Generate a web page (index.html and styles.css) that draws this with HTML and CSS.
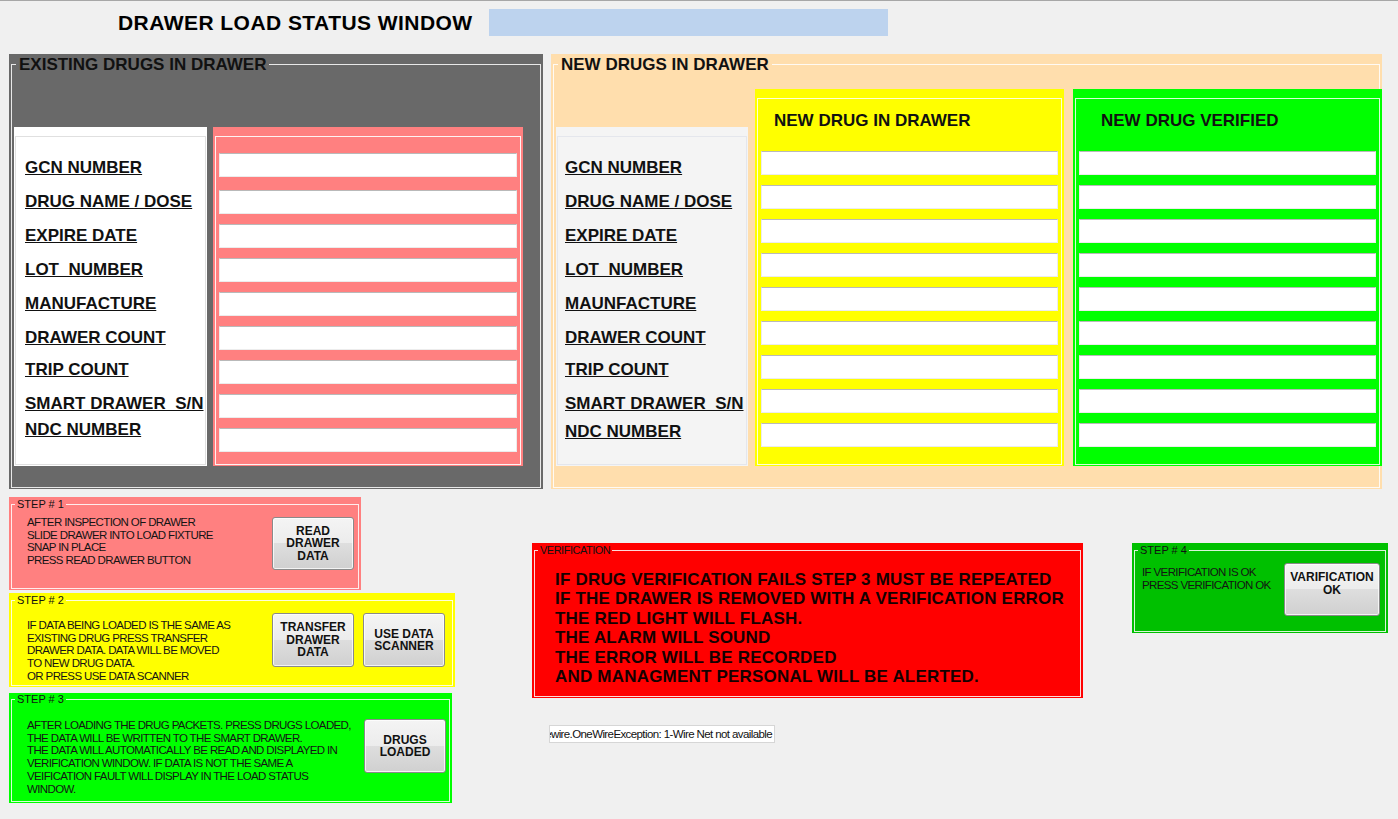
FILE: index.html
```html
<!DOCTYPE html>
<html>
<head>
<meta charset="utf-8">
<title>Drawer Load Status</title>
<link rel="stylesheet" href="styles.css">
</head>
<body>
<div class="app">
  <header class="hdr">
    <h1 class="title">DRAWER LOAD STATUS WINDOW</h1>
    <div class="status-bar"></div>
  </header>

  <section class="top">
    <div class="gb existing">
      <fieldset>
        <legend>EXISTING DRUGS IN DRAWER</legend>
        <div class="cols">
          <div class="lblpanel lp-white">
            <div class="frame">
              <span class="lbl">GCN NUMBER</span>
              <span class="lbl">DRUG NAME / DOSE</span>
              <span class="lbl">EXPIRE DATE</span>
              <span class="lbl">LOT  NUMBER</span>
              <span class="lbl">MANUFACTURE</span>
              <span class="lbl">DRAWER COUNT</span>
              <span class="lbl lbl-trip">TRIP COUNT</span>
              <span class="lbl">SMART DRAWER  S/N</span>
              <span class="lbl lbl-ndc">NDC NUMBER</span>
            </div>
          </div>
          <div class="fpanel fp-pink">
            <div class="frame">
              <div class="fld fld-first"></div>
              <div class="fld"></div>
              <div class="fld"></div>
              <div class="fld"></div>
              <div class="fld"></div>
              <div class="fld"></div>
              <div class="fld"></div>
              <div class="fld"></div>
              <div class="fld"></div>
            </div>
          </div>
        </div>
      </fieldset>
    </div>

    <div class="gb newd">
      <fieldset>
        <legend>NEW DRUGS IN DRAWER</legend>
        <div class="cols">
          <div class="lblpanel lp-gray">
            <div class="frame">
              <span class="lbl">GCN NUMBER</span>
              <span class="lbl">DRUG NAME / DOSE</span>
              <span class="lbl">EXPIRE DATE</span>
              <span class="lbl">LOT  NUMBER</span>
              <span class="lbl">MAUNFACTURE</span>
              <span class="lbl">DRAWER COUNT</span>
              <span class="lbl lbl-trip">TRIP COUNT</span>
              <span class="lbl">SMART DRAWER  S/N</span>
              <span class="lbl lbl-ndc2">NDC NUMBER</span>
            </div>
          </div>
          <div class="dpanel dp-yellow">
            <div class="frame">
              <div class="dtitle">NEW DRUG IN DRAWER</div>
              <div class="fld"></div>
              <div class="fld"></div>
              <div class="fld"></div>
              <div class="fld"></div>
              <div class="fld"></div>
              <div class="fld"></div>
              <div class="fld"></div>
              <div class="fld"></div>
              <div class="fld"></div>
            </div>
          </div>
          <div class="dpanel dp-green">
            <div class="frame">
              <div class="dtitle">NEW DRUG VERIFIED</div>
              <div class="fld"></div>
              <div class="fld"></div>
              <div class="fld"></div>
              <div class="fld"></div>
              <div class="fld"></div>
              <div class="fld"></div>
              <div class="fld"></div>
              <div class="fld"></div>
              <div class="fld"></div>
            </div>
          </div>
        </div>
      </fieldset>
    </div>
  </section>

  <section class="bottom">
    <div class="col-left">
      <div class="gb step step1">
        <fieldset>
          <legend>STEP # 1</legend>
          <div class="sbody">
            <div class="stxt">AFTER INSPECTION OF DRAWER<br>SLIDE DRAWER INTO LOAD FIXTURE<br>SNAP IN PLACE<br>PRESS READ DRAWER BUTTON</div>
            <button class="btn">READ<br>DRAWER<br>DATA</button>
          </div>
        </fieldset>
      </div>
      <div class="gb step step2">
        <fieldset>
          <legend>STEP # 2</legend>
          <div class="sbody">
            <div class="stxt">IF DATA BEING LOADED IS THE SAME AS<br>EXISTING DRUG PRESS TRANSFER<br>DRAWER DATA. DATA WILL BE MOVED<br>TO NEW DRUG DATA.<br>OR PRESS USE DATA SCANNER</div>
            <div class="btns">
              <button class="btn">TRANSFER<br>DRAWER<br>DATA</button>
              <button class="btn">USE DATA<br>SCANNER</button>
            </div>
          </div>
        </fieldset>
      </div>
      <div class="gb step step3">
        <fieldset>
          <legend>STEP # 3</legend>
          <div class="sbody">
            <div class="stxt">AFTER LOADING THE DRUG PACKETS. PRESS DRUGS LOADED,<br>THE DATA WILL BE WRITTEN TO THE SMART DRAWER.<br>THE DATA WILL AUTOMATICALLY BE READ AND DISPLAYED IN<br>VERIFICATION WINDOW. IF DATA IS NOT THE SAME A<br>VEIFICATION FAULT WILL DISPLAY IN THE LOAD STATUS<br>WINDOW.</div>
            <button class="btn">DRUGS<br>LOADED</button>
          </div>
        </fieldset>
      </div>
    </div>

    <div class="col-mid">
      <div class="gb verif">
        <fieldset>
          <legend>VERIFICATION</legend>
          <div class="vtxt">IF DRUG VERIFICATION FAILS STEP 3 MUST BE REPEATED<br>IF THE DRAWER IS REMOVED WITH A VERIFICATION ERROR<br>THE RED LIGHT WILL FLASH.<br>THE ALARM WILL SOUND<br>THE ERROR WILL BE RECORDED<br>AND MANAGMENT PERSONAL WILL BE ALERTED.</div>
        </fieldset>
      </div>
      <div class="msgbox"><span>com.dalsemi.onewire.OneWireException: 1-Wire Net not available</span></div>
    </div>

    <div class="col-right">
      <div class="gb step step4">
        <fieldset>
          <legend>STEP # 4</legend>
          <div class="sbody">
            <div class="stxt">IF VERIFICATION IS OK<br>PRESS VERIFICATION OK</div>
            <button class="btn btn-top">VARIFICATION<br>OK</button>
          </div>
        </fieldset>
      </div>
    </div>
  </section>
</div>
</body>
</html>
```

FILE: styles.css
```css
* { box-sizing: border-box; }
html, body { margin: 0; padding: 0; }
body {
  background: #f0f0f0;
  font-family: "Liberation Sans", Arial, sans-serif;
  color: #000;
}
.app {
  width: 1398px;
  height: 819px;
  border-top: 1px solid #a7a7a7;
  overflow: hidden;
}

/* header */
.hdr {
  display: flex;
  align-items: center;
  height: 35px;
  padding: 8px 0 0 118px;
}
.title {
  margin: 0;
  font-size: 21px;
  font-weight: bold;
  letter-spacing: 0.45px;
  line-height: 27px;
  color: #000;
  white-space: nowrap;
}
.status-bar {
  margin-left: 16px;
  width: 399px;
  height: 27px;
  background: #bdd3ee;
}

/* group boxes */
.gb { padding: 1px 2px 1px; }
.gb > fieldset {
  margin: 0;
  padding: 0;
  min-width: 0;
  height: 100%;
  border: 1px solid rgba(255, 255, 255, 0.85);
}
.gb > fieldset > legend {
  margin-left: 4px;
  padding: 0 3px;
  font-size: 17px;
  font-weight: bold;
  line-height: 19px;
  color: #111;
  white-space: nowrap;
}

/* top panels */
.top {
  display: flex;
  gap: 8px;
  margin: 18px 0 0 9px;
}
.existing { width: 534px; height: 435px; background: #696969; }
.newd { width: 831px; height: 435px; background: #ffdead; }

.cols {
  display: flex;
  align-items: flex-start;
  padding-left: 2px;
}
.cols > * { flex: none; }
.existing .cols { margin-top: 53px; gap: 6px; }
.newd .cols { margin-top: 15px; }

.lblpanel {
  height: 339px;
  padding: 9px 1px 1px;
  display: flex;
}
.lblpanel .frame {
  flex: 1;
  display: flex;
  flex-direction: column;
  padding: 14px 0 0 9px;
}
.lp-white { width: 193px; background: #fff; }
.lp-white .frame { border: 1px solid #e0e0e0; }
.lp-gray { width: 192px; margin-top: 38px; background: #f4f4f4; }
.lp-gray .frame { border: 1px solid #e4e6ec; padding-left: 7px; }

.lbl {
  display: block;
  font-size: 17px;
  font-weight: bold;
  line-height: 34px;
  text-decoration: underline;
  white-space: pre;
  color: #111;
}
.lbl-trip { margin-top: -2px; }
.lbl-ndc { margin-top: -8px; }
.lbl-ndc2 { margin-top: -6px; }

.fpanel {
  height: 339px;
  padding: 9px 2px 1px;
  display: flex;
}
.fp-pink { width: 310px; background: #ff8080; }
.fpanel .frame {
  flex: 1;
  display: flex;
  flex-direction: column;
  gap: 10px;
  padding: 16px 3px 0;
  border: 1px solid rgba(255, 255, 255, 0.9);
}
.fld {
  flex: none;
  height: 24px;
  background: #fff;
  border: 1px solid #ececec;
  border-top-color: #b9b9b9;
}
.fld-first { margin-bottom: 3px; }

.dpanel {
  width: 309px;
  height: 377px;
  padding: 9px 2px 1px;
  display: flex;
}
.dp-yellow { background: #ffff00; margin-left: 7px; }
.dp-green { background: #00ff00; margin-left: 9px; margin-right: -3px; }
.dpanel .frame {
  flex: 1;
  display: flex;
  flex-direction: column;
  gap: 10px;
  padding: 5px 3px 0;
  border: 1px solid rgba(255, 255, 255, 0.85);
}
.dtitle {
  font-size: 17px;
  font-weight: bold;
  line-height: 34px;
  margin-bottom: 3px;
  padding-left: 13px;
  color: #111;
  white-space: nowrap;
}
.dp-green .dtitle { padding-left: 22px; }

/* bottom */
.bottom {
  display: flex;
  align-items: flex-start;
  margin: 8px 0 0 9px;
}
.col-left {
  width: 446px;
  display: flex;
  flex-direction: column;
  align-items: flex-start;
}
.col-mid {
  width: 551px;
  margin: 46px 0 0 77px;
}
.col-right {
  margin: 46px 0 0 49px;
}

.step > fieldset > legend,
.verif > fieldset > legend {
  margin-left: 3px;
  padding: 0 2px;
  font-size: 11px;
  font-weight: normal;
  line-height: 13px;
  color: #111;
}
.verif > fieldset > legend { letter-spacing: -0.5px; }

.step1 { width: 352px; height: 93px; background: #ff8080; }
.step2 { width: 446px; height: 94px; margin-top: 3px; background: #ffff00; }
.step3 { width: 443px; height: 110px; margin-top: 6px; background: #00ff00; padding-top: 0; }
.step4 { width: 256px; height: 90px; background: #00c000; }

.sbody {
  display: flex;
  align-items: flex-start;
}
.stxt {
  flex: 1;
  padding-left: 15px;
  font-size: 11.5px;
  line-height: 12.7px;
  letter-spacing: -0.62px;
  color: #141414;
  white-space: nowrap;
}
.step1 .stxt { margin-top: 5px; }
.step2 .stxt { margin-top: 12px; }
.step3 .stxt { margin-top: 13px; }
.step4 .stxt { margin-top: 9px; padding-left: 7px; line-height: 12.5px; }

.btns { display: flex; gap: 9px; }

.btn {
  flex: none;
  width: 82px;
  height: 54px;
  padding: 0;
  margin: 0;
  display: flex;
  align-items: center;
  justify-content: center;
  text-align: center;
  font-family: "Liberation Sans", Arial, sans-serif;
  font-size: 12px;
  font-weight: bold;
  line-height: 12.5px;
  color: #111;
  border: 1px solid #8a8a8a;
  border-radius: 3px;
  background: linear-gradient(#f4f4f4 0%, #ececec 50%, #dedede 50%, #d0d0d0 100%);
  box-shadow: inset 0 0 0 1px rgba(255, 255, 255, 0.75);
}
.step1 .btn { margin: 6px 4px 0 0; height: 53px; }
.step2 .btns { margin: 6px 7px 0 0; }
.step3 .btn { margin: 13px 3px 0 0; }
.step4 .btn { margin: 6px 5px 0 0; width: 96px; height: 53px; }
.btn-top { align-items: flex-start; padding-top: 7px; }

.verif { width: 551px; height: 155px; background: #ff0000; }
.vtxt {
  margin-top: 13px;
  padding-left: 20px;
  font-size: 17px;
  font-weight: bold;
  line-height: 19.4px;
  letter-spacing: 0.2px;
  color: #150000;
  white-space: nowrap;
}

.msgbox {
  margin: 27px 0 0 17px;
  width: 226px;
  height: 18px;
  display: flex;
  justify-content: flex-end;
  align-items: center;
  overflow: hidden;
  padding-right: 2px;
  background: #fff;
  border: 1px solid #d6d6d6;
}
.msgbox span {
  flex: none;
  font-size: 11.5px;
  letter-spacing: -0.6px;
  white-space: nowrap;
  color: #111;
}
```
